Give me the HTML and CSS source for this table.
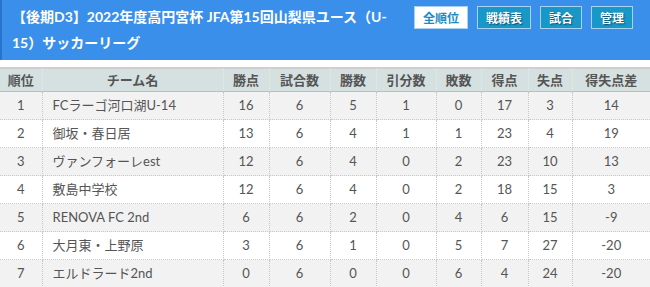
FILE: index.html
```html
<!DOCTYPE html>
<html lang="ja">
<head>
<meta charset="utf-8">
<link rel="stylesheet" href="styles.css">
</head>
<body>
<header class="head">
  <h1 class="title">【後期D3】2022年度高円宮杯 JFA第15回山梨県ユース（U-15）サッカーリーグ</h1>
  <nav class="btns">
    <a class="btn btn-active">全順位</a>
    <a class="btn">戦績表</a>
    <a class="btn">試合</a>
    <a class="btn">管理</a>
  </nav>
</header>
<table class="standings">
  <colgroup>
    <col style="width:42px"><col style="width:181px"><col style="width:46px"><col style="width:61px"><col style="width:46px"><col style="width:60px"><col style="width:45px"><col style="width:47px"><col style="width:44px"><col style="width:78px">
  </colgroup>
  <thead>
    <tr><th>順位</th><th>チーム名</th><th>勝点</th><th>試合数</th><th>勝数</th><th>引分数</th><th>敗数</th><th>得点</th><th>失点</th><th>得失点差</th></tr>
  </thead>
  <tbody>
    <tr><td>1</td><td class="team">FCラーゴ河口湖U-14</td><td>16</td><td>6</td><td>5</td><td>1</td><td>0</td><td>17</td><td>3</td><td>14</td></tr>
    <tr><td>2</td><td class="team">御坂・春日居</td><td>13</td><td>6</td><td>4</td><td>1</td><td>1</td><td>23</td><td>4</td><td>19</td></tr>
    <tr><td>3</td><td class="team">ヴァンフォーレest</td><td>12</td><td>6</td><td>4</td><td>0</td><td>2</td><td>23</td><td>10</td><td>13</td></tr>
    <tr><td>4</td><td class="team">敷島中学校</td><td>12</td><td>6</td><td>4</td><td>0</td><td>2</td><td>18</td><td>15</td><td>3</td></tr>
    <tr><td>5</td><td class="team">RENOVA FC 2nd</td><td>6</td><td>6</td><td>2</td><td>0</td><td>4</td><td>6</td><td>15</td><td>-9</td></tr>
    <tr><td>6</td><td class="team">大月東・上野原</td><td>3</td><td>6</td><td>1</td><td>0</td><td>5</td><td>7</td><td>27</td><td>-20</td></tr>
    <tr><td>7</td><td class="team">エルドラード2nd</td><td>0</td><td>6</td><td>0</td><td>0</td><td>6</td><td>4</td><td>24</td><td>-20</td></tr>
  </tbody>
</table>
</body>
</html>
```
FILE: styles.css
```css
html, body {
  margin: 0;
  padding: 0;
  background: #fff;
  font-family: Lato, "Noto Sans CJK JP", sans-serif;
}
.head {
  display: flex;
  justify-content: space-between;
  align-items: flex-start;
  background: #3a8fea;
  border-left: 2px solid #2674cc;
  height: 60px;
  box-sizing: border-box;
}
.title {
  margin: 0;
  padding: 4px 0 0 10px;
  width: 392px;
  font-size: 14px;
  line-height: 26px;
  font-weight: bold;
  color: #fff;
  font-family: Lato, "Noto Sans CJK JP", sans-serif;
}
.btns {
  display: flex;
  gap: 9px;
  padding: 6px 17px 0 0;
}
.btn {
  display: block;
  box-sizing: border-box;
  height: 23px;
  line-height: 21px;
  padding: 0 8px;
  border: 1px solid #a9d2f2;
  background: #1798c8;
  color: #fff;
  font-size: 12px;
  font-weight: bold;
  font-family: "Noto Sans CJK JP", sans-serif;
  text-shadow: 1px 1px 1px #0a4f6e;
}
.btn-active {
  background: #fff;
  color: #1b8bc4;
  text-shadow: none;
}
.standings {
  margin-top: 7px;
  width: 650px;
  border-collapse: collapse;
  table-layout: fixed;
  border-top: 2px solid #cfcfcf;
  font-size: 13px;
  color: #555;
}
.standings th {
  background: #d5e1e1;
  color: #555;
  font-weight: bold;
  font-family: "Noto Sans CJK JP", sans-serif;
  height: 22px;
  padding: 0;
  line-height: 22px;
  border-left: 1px dotted #e4eaea;
  border-bottom: 1px solid #bdbdbd;
  text-align: center;
}
.standings th:first-child { border-left: none; }
.standings td {
  height: 19px;
  line-height: 19px;
  padding: 4px 0;
  text-align: center;
  border: 1px dotted #c8c8c8;
}
.standings td:first-child { border-left: none; }
.standings td:last-child { border-right: none; }
.standings td.team {
  text-align: left;
  padding-left: 10px;
}
.standings tbody tr:nth-child(odd) td { background: #f2f2f2; }
.standings tbody tr:nth-child(even) td { background: #fff; }
```
